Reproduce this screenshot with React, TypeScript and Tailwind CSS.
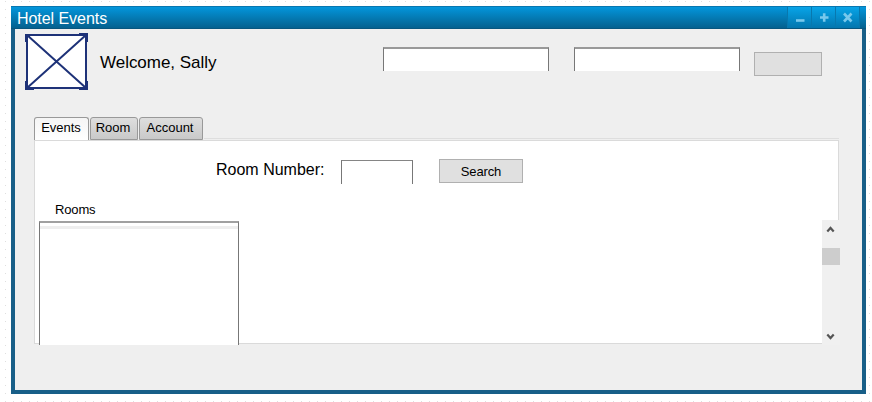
import React from "react";

function ImagePlaceholder() {
  return (
    <svg className="mt-1 ml-[10px] h-[57px] w-[63px] shrink-0" viewBox="0 0 63 57" fill="none">
      <rect x="2" y="2" width="59" height="53" fill="#fff" stroke="#1e3278" strokeWidth="2" />
      <path d="M2 2L61 55M61 2L2 55" stroke="#1e3278" strokeWidth="2" />
      <path
        d="M1.5 9V2M0 2.5H5M54 1.5H61.5V9M1.5 48V55.5H9M54 55.5H61.5V48"
        stroke="#1e3278"
        strokeWidth="3"
      />
    </svg>
  );
}

function Field({ className }: { className: string }) {
  return (
    <div className={`shrink-0 border-x border-t border-x-[#777777] border-t-[#858585] bg-white ${className}`} />
  );
}

function PushButton({ className, children }: { className: string; children?: React.ReactNode }) {
  return (
    <button
      className={`flex h-6 shrink-0 items-center justify-center border border-[#b0b0b0] bg-[#e0e0e0] pt-px text-[13px] tracking-[-0.15px] ${className}`}
    >
      {children}
    </button>
  );
}

function TitleButton({ children }: { children: React.ReactNode }) {
  return (
    <button className="flex h-[21px] w-6 items-center justify-center border-l border-[#0878ae] bg-linear-to-b from-[#08a4e8] to-[#0376ae]">
      <svg className="h-3 w-3" viewBox="0 0 12 12" fill="none" stroke="#78c8ec" strokeWidth="2.6">
        {children}
      </svg>
    </button>
  );
}

function TitleBar() {
  return (
    <div className="flex h-[23px] justify-between border-t border-b border-t-[#0877b0] border-b-[#07567f] bg-linear-to-b from-[#0396dc] to-[#04618f] pr-[6px]">
      <span className="ml-[6px] pt-px text-[16px] leading-[22px] tracking-[-0.05px] text-white">
        Hotel Events
      </span>
      <div className="flex border-r border-[#0878ae]">
        <TitleButton>
          <path d="M2 8.5H10.5" />
        </TitleButton>
        <TitleButton>
          <path d="M2 5.5H10.5M6.2 1.3V9.8" />
        </TitleButton>
        <TitleButton>
          <path d="M2 1.5L9.5 9.5M9.5 1.5L2 9.5" />
        </TitleButton>
      </div>
    </div>
  );
}

function Tabs() {
  const inactive =
    "h-[23px] rounded-t-[3px] border border-[#999999] bg-linear-to-b from-[#dedede] to-[#c9c9c9] text-[13px] leading-[19px]";
  return (
    <div className="ml-[19px] flex h-[23px] gap-px">
      <div className="h-[23px] w-[55px] rounded-t-[3px] border border-b-0 border-[#999999] bg-linear-to-b from-[#f5f5f5] to-white pr-px text-center text-[13px] leading-[19px]">
        Events
      </div>
      <div className={`w-12 pr-[2px] text-center ${inactive}`}>Room</div>
      <div className={`w-16 pr-[2px] text-center ${inactive}`}>Account</div>
      <div className="mt-[21px] mr-[23px] h-px grow bg-[#dedede]" />
    </div>
  );
}

function ScrollBar() {
  return (
    <div className="-mr-[2px] flex h-[125px] w-[18px] shrink-0 flex-col bg-[#f0f0f0]">
      <svg className="h-7 w-[18px]" viewBox="0 0 18 28" fill="none">
        <path d="M5.3 11.5L8.5 8L11.7 11.5" stroke="#555" strokeWidth="2.2" />
      </svg>
      <div className="h-[17px] shrink-0 bg-[#cdcdcd]" />
      <svg className="mt-auto h-5 w-[18px]" viewBox="0 0 18 20" fill="none">
        <path d="M5.3 9.5L8.5 13L11.7 9.5" stroke="#555" strokeWidth="2.2" />
      </svg>
    </div>
  );
}

function EventsPanel() {
  return (
    <div className="ml-[19px] h-[204px] w-[805px] border border-[#dadada] bg-white">
      <div className="flex h-[52px] items-start">
        <span className="mt-[19px] ml-[181px] w-[125px] text-[16px] leading-5 whitespace-nowrap">
          Room Number:
        </span>
        <Field className="mt-[19px] h-6 w-[72px]" />
        <PushButton className="mt-[18px] ml-[26px] w-[84px]">Search</PushButton>
      </div>
      <div className="mt-2 ml-5 h-[19px] text-[13px] leading-[18px] tracking-[-0.15px]">Rooms</div>
      <div className="flex justify-between">
        <div className="mt-px ml-1 h-[124px] w-[200px] border-x border-t-2 border-x-[#777777] border-t-[#a0a0a0] bg-white pt-[3px]">
          <div className="h-[3px] bg-[#eeeeee]" />
        </div>
        <ScrollBar />
      </div>
    </div>
  );
}

export default function App() {
  return (
    <div className="h-[402px] w-[872px] overflow-hidden bg-white bg-[conic-gradient(from_270deg_at_1px_1px,#dfdfdf_90deg,transparent_90deg)] bg-[length:8px_8px] bg-[position:5px_1px] pt-[6px] pl-[11px] font-['Liberation_Sans',Arial,sans-serif] text-black">
      <div className="h-[388px] w-[855px] bg-[#185f88]">
        <TitleBar />
        <div className="mx-1 h-[361px] bg-[#efefef]">
          <div className="flex h-[88px] items-start">
            <ImagePlaceholder />
            <span className="mt-6 ml-3 w-[283px] text-[17px] leading-5 tracking-[-0.03px]">
              Welcome, Sally
            </span>
            <Field className="mt-[18px] h-6 w-[166px] border-t-2 border-t-[#999999]" />
            <Field className="mt-[18px] ml-[25px] h-6 w-[166px] border-t-2 border-t-[#999999]" />
            <PushButton className="mt-[23px] ml-[14px] w-[68px]" />
          </div>
          <Tabs />
          <EventsPanel />
        </div>
      </div>
    </div>
  );
}
